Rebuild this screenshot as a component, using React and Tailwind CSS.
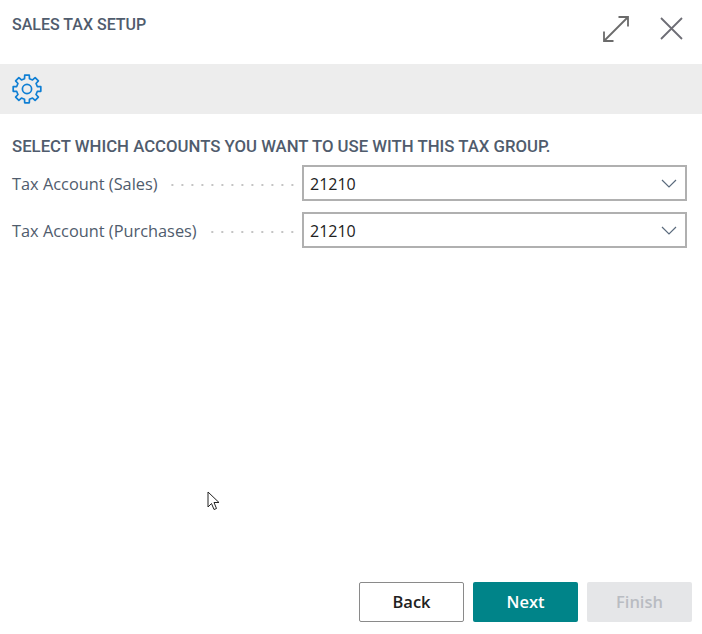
const fields = [
  { label: 'Tax Account (Sales)', value: '21210' },
  { label: 'Tax Account (Purchases)', value: '21210' },
]

// cog outline with 8 teeth, like the one in the action bar
const cogPath = () => {
  const pts = []
  const teeth = 8
  for (let i = 0; i < teeth; i++) {
    const a = (i / teeth) * Math.PI * 2 - Math.PI / 2
    const step = (Math.PI * 2) / teeth
    pts.push([a - step * 0.3, 10.6])
    pts.push([a - step * 0.21, 14])
    pts.push([a + step * 0.21, 14])
    pts.push([a + step * 0.3, 10.6])
  }
  return (
    pts
      .map(([a, r], i) => `${i ? 'L' : 'M'}${(15 + r * Math.cos(a)).toFixed(2)} ${(15 + r * Math.sin(a)).toFixed(2)}`)
      .join('') + 'Z'
  )
}

function Field({ label, value }) {
  return (
    <div className="flex items-center h-9">
      <div className="w-[290px] flex items-center shrink-0 pr-[5px]">
        <span className="text-[16.35px] leading-9 pt-[1px] text-[#505c6d] whitespace-nowrap">{label}</span>
        <span className="flex-1 ml-[13px] mt-1 h-1 bg-[radial-gradient(circle,#c4c4c4_0.9px,transparent_1.2px)] bg-[length:10px_4px] bg-right" />
      </div>
      <div className="w-[385px] h-9 border-2 border-[#b0b0b0] flex items-center justify-between pl-[6px] pr-[8px] pt-[1px] text-[16px] text-[#212121]">
        <span>{value}</span>
        <svg width="16" height="9" viewBox="0 0 16 9" fill="none" stroke="#5b6b7d" strokeWidth="1.2">
          <path d="M1 1l7 7 7-7" />
        </svg>
      </div>
    </div>
  )
}

export default function App() {
  return (
    <div className="relative w-[702px] h-[634px] bg-white flex flex-col font-['Open_Sans','Noto_Sans',sans-serif]">
      {/* Title bar */}
      <div className="h-16 shrink-0 flex justify-between pl-3 pr-[18px]">
        <h1 className="mt-[14px] text-[16px] leading-[22px] font-medium text-[#505c6d] font-['Roboto',sans-serif]">SALES TAX SETUP</h1>
        <div className="flex gap-[30px] mt-4">
          <svg width="26" height="26" viewBox="0 0 26 26" fill="none" stroke="#6b6b6b" strokeWidth="1.8">
            <path d="M1 25L25 1M15.5 1H25v9.5M1 15.5V25h9.5" />
          </svg>
          <svg width="25" height="25" viewBox="0 0 25 25" fill="none" stroke="#6d6d75" strokeWidth="1.8">
            <path d="M2 2l21 21M23 2L2 23" />
          </svg>
        </div>
      </div>

      {/* Action bar */}
      <div className="h-[50px] shrink-0 bg-[#ededed] flex items-center pl-3">
        <svg width="30" height="30" viewBox="0 0 30 30" fill="none" stroke="#0f7fd4" strokeWidth="1.7" strokeLinejoin="round" className="-mt-[1px]">
          <path d={cogPath()} />
          <circle cx="15" cy="15" r="4.6" />
        </svg>
      </div>

      {/* Content */}
      <div className="flex-1 pl-3 pr-[15px]">
        <h2 className="mt-[21px] text-[16.75px] leading-[22px] font-medium text-[#505c6d] font-['Roboto',sans-serif]">
          SELECT WHICH ACCOUNTS YOU WANT TO USE WITH THIS TAX GROUP.
        </h2>
        <div className="mt-[8px] flex flex-col gap-[11px]">
          {fields.map((f) => (
            <Field key={f.label} {...f} />
          ))}
        </div>
      </div>

      {/* Footer buttons */}
      <div className="shrink-0 flex justify-end gap-[9px] pr-[10px] pb-3">
        <button className="w-[105px] h-10 pt-[1px] rounded-[2px] border border-[#8a8a8a] bg-white text-[16.5px] font-semibold text-[#212121]">Back</button>
        <button className="w-[105px] h-10 pt-[1px] rounded-[2px] bg-[#008489] text-[16.5px] font-semibold text-white">Next</button>
        <button className="w-[105px] h-10 pt-[1px] rounded-[2px] bg-[#e5e6e8] text-[16.5px] font-semibold text-[#b9bcc2]">Finish</button>
      </div>

      {/* Mouse cursor */}
      <svg className="absolute left-[207px] top-[491px]" width="14" height="22" viewBox="0 0 14 22" fill="white" stroke="#222" strokeWidth="1">
        <path d="M1 1v15l3.5-3.5 2.5 6 2.5-1-2.5-6H12z" />
      </svg>
    </div>
  )
}
